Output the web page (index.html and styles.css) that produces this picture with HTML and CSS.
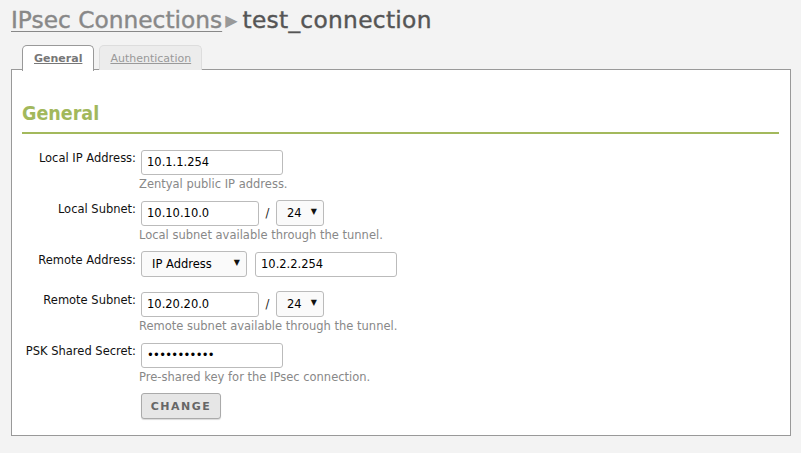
FILE: index.html
```
<!DOCTYPE html>
<html>
<head>
<meta charset="utf-8">
<link rel="stylesheet" href="styles.css">
</head>
<body>
<h1 class="title"><a class="crumb" href="#">IPsec Connections</a><span class="sep">&#9654;</span><span class="current">test_connection</span></h1>
<div class="tabs">
  <a class="tab active" href="#">General</a>
  <a class="tab" href="#">Authentication</a>
</div>
<div class="panel">
  <h2 class="section">General</h2>
  <form class="form">
    <div class="row">
      <label class="label">Local IP Address:</label>
      <div class="field">
        <div class="line"><input class="input w142" type="text" value="10.1.1.254"></div>
        <div class="help">Zentyal public IP address.</div>
      </div>
    </div>
    <div class="row">
      <label class="label">Local Subnet:</label>
      <div class="field">
        <div class="line">
          <input class="input w118" type="text" value="10.10.10.0">
          <span class="slash">/</span>
          <span class="select w48"><span class="sel-text">24</span><span class="arrow">&#9660;</span></span>
        </div>
        <div class="help">Local subnet available through the tunnel.</div>
      </div>
    </div>
    <div class="row nohelp">
      <label class="label">Remote Address:</label>
      <div class="field">
        <div class="line">
          <span class="select w106"><span class="sel-text">IP Address</span><span class="arrow">&#9660;</span></span>
          <input class="input w142 gap8" type="text" value="10.2.2.254">
        </div>
      </div>
    </div>
    <div class="row">
      <label class="label">Remote Subnet:</label>
      <div class="field">
        <div class="line">
          <input class="input w118" type="text" value="10.20.20.0">
          <span class="slash">/</span>
          <span class="select w48"><span class="sel-text">24</span><span class="arrow">&#9660;</span></span>
        </div>
        <div class="help">Remote subnet available through the tunnel.</div>
      </div>
    </div>
    <div class="row">
      <label class="label">PSK Shared Secret:</label>
      <div class="field">
        <div class="line"><input class="input w142 secret" type="password" value="secretsecre"></div>
        <div class="help">Pre-shared key for the IPsec connection.</div>
      </div>
    </div>
    <div class="row">
      <span class="label"></span>
      <div class="field"><button class="button" type="button">CHANGE</button></div>
    </div>
  </form>
</div>
</body>
</html>
```
FILE: styles.css
```
html, body {
  margin: 0;
  padding: 0;
  background: #f3f3f3;
  font-family: "DejaVu Sans", Verdana, sans-serif;
  font-size: 11.5px;
  color: #000;
}
body {
  padding: 0 10px 0 11px;
}
.title {
  margin: 0;
  padding-top: 5px;
  height: 40px;
  font-size: 23.3px;
  font-weight: normal;
  line-height: 30px;
  white-space: nowrap;
  -webkit-text-stroke: 0.4px;
}
.crumb {
  color: #888;
  -webkit-text-stroke-color: #888;
  text-decoration: underline;
  text-decoration-thickness: 1px;
  text-underline-offset: 3px;
}
.sep {
  color: #999;
  -webkit-text-stroke-width: 0;
  font-size: 16px;
  margin: 0 5px 0 3px;
  position: relative;
  top: -2px;
}
.current {
  color: #555;
  -webkit-text-stroke-color: #555;
  letter-spacing: 0.3px;
}
.tabs {
  display: flex;
  gap: 5px;
  padding-left: 11px;
  height: 25px;
  position: relative;
  z-index: 1;
}
.tab {
  display: block;
  height: 24px;
  line-height: 25px;
  padding: 0 10px;
  border: 1px solid #ddd;
  border-bottom: none;
  border-radius: 5px 5px 0 0;
  background: #ececec;
  color: #999;
  font-size: 11px;
  text-decoration: underline;
}
.tab.active {
  height: 25px;
  padding: 0 11px;
  background: #fff;
  border-color: #999;
  color: #777;
  font-weight: bold;
}
.panel {
  border: 1px solid #999;
  background: #fff;
  margin-top: -1px;
  padding: 0 11px 16px 10px;
  width: 757px;
}
.section {
  margin: 31px 0 0 0;
  padding: 0 0 5px 0;
  font-family: "DejaVu Sans Condensed", "DejaVu Sans", sans-serif;
  font-stretch: condensed;
  font-size: 19.5px;
  line-height: 26px;
  font-weight: bold;
  color: #a2b85c;
  border-bottom: 2px solid #a3b95c;
}
.form {
  padding-top: 15px;
}
.row {
  display: flex;
  align-items: flex-start;
  margin-bottom: 8px;
}
.row.nohelp {
  margin-bottom: 14px;
}
.row:last-child {
  margin-bottom: 0;
}
.label {
  width: 114px;
  text-align: right;
  padding-top: 2px;
  padding-right: 5px;
  line-height: 14px;
  color: #111;
  flex: none;
}
.field {
  display: flex;
  flex-direction: column;
}
.line {
  display: flex;
  align-items: center;
  height: 26px;
}
.input {
  box-sizing: border-box;
  height: 25px;
  border: 1px solid #bbb;
  border-radius: 3px;
  background: #fff;
  font-family: "DejaVu Sans", Verdana, sans-serif;
  font-size: 11.5px;
  padding: 0 5px;
  color: #000;
  margin: 0;
  outline: none;
}
.secret {
  letter-spacing: -0.7px;
}
.w142 { width: 142px; }
.w118 { width: 118px; }
.gap8 { margin-left: 8px; }
.slash {
  width: 17px;
  text-align: center;
  color: #222;
}
.select {
  box-sizing: border-box;
  height: 26px;
  border: 1px solid #bbb;
  border-radius: 3px;
  background: #fafafa;
  display: flex;
  align-items: center;
  justify-content: space-between;
  padding: 0 6px 0 10px;
  color: #000;
}
.w48 { width: 48px; }
.w106 { width: 106px; }
.arrow {
  font-size: 8px;
  color: #111;
  position: relative;
  top: -2px;
}
.help {
  color: #888;
  line-height: 15px;
  margin-top: 2px;
  margin-left: -2px;
  white-space: nowrap;
}
.button {
  box-sizing: border-box;
  width: 80px;
  height: 26px;
  margin-top: 0;
  border: 1px solid #aaa;
  border-radius: 3px;
  background: #e6e6e6;
  color: #666;
  font-family: "DejaVu Sans", Verdana, sans-serif;
  font-weight: bold;
  font-size: 11px;
  letter-spacing: 1.5px;
  padding: 0;
  box-shadow: 0 1px 1px rgba(0,0,0,0.15);
}
```
